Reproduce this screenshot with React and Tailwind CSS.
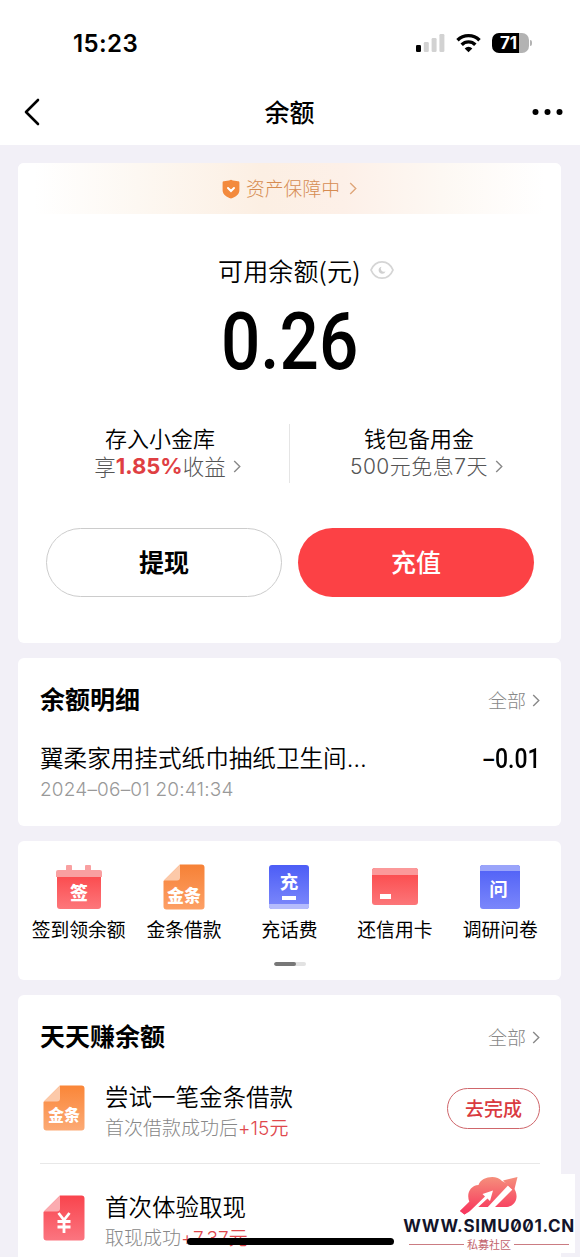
import React from "react";

const Chevron = ({ className }) => (
  <svg viewBox="0 0 8 14" className={className} fill="none" stroke="currentColor" strokeWidth="1.5">
    <path d="M1 1l6 6-6 6" />
  </svg>
);

function StatusBar() {
  return (
    <div className="flex h-[80px] items-start justify-between pl-[73px] pr-[48px] pt-[29px]">
      <div className="font-[Inter] text-[24px] font-semibold leading-[29px] tracking-[0.4px]">15:23</div>
      <div className="flex items-center pt-[4px]">
        <svg width="30" height="20" viewBox="0 0 30 20">
          <rect x="0" y="12" width="5" height="7" rx="1.3" fill="#000" />
          <rect x="7.8" y="9" width="5" height="10" rx="1.3" fill="#d2d2d2" />
          <rect x="15.6" y="5" width="5" height="14" rx="1.3" fill="#d2d2d2" />
          <rect x="23.4" y="1" width="5" height="18" rx="1.3" fill="#d2d2d2" />
        </svg>
        <svg width="25" height="20" viewBox="0 0 25 20" className="ml-[10px]" fill="none" stroke="#000" strokeWidth="3.4">
          <path d="M1.500 7.200a15.500 15.500 0 0 1 22 0" />
          <path d="M5.700 11.700a9.500 9.500 0 0 1 13.600 0" />
          <path d="M12.500 19.300l-3.800-3.900a5.300 5.300 0 0 1 7.600 0z" fill="#000" stroke="none" />
        </svg>
        <div className="ml-[11px] flex h-[20px] w-[37px] items-center justify-center overflow-hidden rounded-[7px] bg-[linear-gradient(90deg,#000_27px,#b3b3b3_27px)] pr-[4px]">
          <span className="font-[Inter] text-[17px] font-bold leading-[20px] text-white">71</span>
        </div>
        <div className="ml-[1px] h-[6px] w-[2px] rounded-r bg-[#b3b3b3]" />
      </div>
    </div>
  );
}

function Header() {
  return (
    <div className="flex h-[65px] items-center justify-between pl-[23px] pr-[17px]">
      <svg width="17" height="28" viewBox="0 0 17 28" className="-mt-[2px]" fill="none" stroke="#000" strokeWidth="2.6" strokeLinecap="round" strokeLinejoin="round">
        <path d="M15 2L3 14l12 12" />
      </svg>
      <h1 className="-mt-[3px] pl-[7px] text-[25px] font-medium leading-[36px]">余额</h1>
      <svg width="31" height="8" viewBox="0 0 31 8" className="-mt-[2px]">
        <circle cx="3.5" cy="4" r="3" />
        <circle cx="15.5" cy="4" r="3" />
        <circle cx="27.5" cy="4" r="3" />
      </svg>
    </div>
  );
}

function Offer({ title, className, children }) {
  return (
    <div className={`flex flex-1 flex-col items-center ${className}`}>
      <div className="text-[22px] font-[350] leading-[26px]">{title}</div>
      <div className="mt-[3px] flex h-[26px] items-center whitespace-nowrap font-light leading-[26px] text-[#555]">
        {children}
        <Chevron className="-mr-[15px] ml-[7px] h-[13px] w-[8px] text-[#888]" />
      </div>
    </div>
  );
}

function BalanceCard() {
  return (
    <section className="h-[480px] overflow-hidden rounded-[6px] bg-white">
      <div className="flex h-[51px] items-center justify-center bg-[linear-gradient(90deg,#fff_3%,#fdf8f2_22%,#fcefe3_45%,#fdf0e8_60%,#fdf8f3_78%,#fff_97%)] text-[#d68c51]">
        <svg width="18" height="20" viewBox="0 0 18 20" className="mr-[6px]">
          <path d="M9 .8c2.700 1 5 1.400 7 1.400a1.300 1.300 0 0 1 1.400 1.300v7.800c0 4.500-4.200 6.800-8.400 8.200-4.200-1.400-8.400-3.700-8.400-8.200V3.500A1.300 1.300 0 0 1 2 2.200C4 2.200 6.300 1.800 9 .8z" fill="#f38a3d" />
          <path d="M6 9l3 3 3-3" fill="none" stroke="#fff" strokeWidth="2" strokeLinecap="round" />
        </svg>
        <span className="text-[18.800px] font-light">资产保障中</span>
        <Chevron className="ml-[9px] h-[13px] w-[8px] text-[#dfa77b]" />
      </div>
      <div className="mt-[38px] flex h-[36px] items-center whitespace-nowrap pl-[200px]">
        <span className="text-[25px] font-[350] leading-[36px] tracking-[0.15px]">可用余额(元)</span>
        <svg width="24" height="20" viewBox="0 0 24 20" className="ml-[9px]" fill="none">
          <path d="M1 10C3.500 4 7.500 1.800 12 1.800S20.500 4 23 10c-2.500 6-6.500 8.200-11 8.200S3.500 16 1 10z" stroke="#d5d5d5" strokeWidth="1.800" />
          <path d="M11.500 6.800a3.500 3.500 0 1 0 4 4.400 3 3 0 0 1-4-4.400z" fill="#d0d0d0" />
        </svg>
      </div>
      <div className="mt-[12px] h-[82px] pl-[203px]">
        <div className="inline-block origin-left scale-x-[0.865] whitespace-nowrap font-[Roboto] text-[80px] font-medium leading-[84px]">0.26</div>
      </div>
      <div className="mt-[42px] flex h-[59px] items-stretch">
        <Offer title="存入小金库" className="pl-[13px]">
          <span className="text-[21.500px]">享</span>
          <b className="font-[Inter] text-[22px] font-bold text-[#df3f43]">1.85%</b>
          <span className="text-[21.500px]">收益</span>
        </Offer>
        <div className="w-px bg-[#e5e5e5]" />
        <Offer title="钱包备用金" className="pr-[13px]">
          <span className="pt-px font-[Inter,Noto_Sans_CJK_SC] text-[21px] tracking-[0.5px]">500元免息7天</span>
        </Offer>
      </div>
      <div className="mt-[45px] flex gap-[16px] pl-[28px] pr-[27px]">
        <button className="h-[69px] w-[236px] rounded-full border border-[#ccc] pb-px text-[25px] font-bold">提现</button>
        <button className="h-[69px] w-[236px] rounded-full bg-[#fc4145] pb-px text-[25px] font-medium text-white">充值</button>
      </div>
    </section>
  );
}

function SectionHead({ title }) {
  return (
    <div className="flex items-center justify-between">
      <h2 className="text-[25px] font-bold leading-[36px]">{title}</h2>
      <a className="flex items-center pt-[4px] text-[19px] font-light text-[#888]">
        全部
        <Chevron className="ml-[6px] h-[13px] w-[8px]" />
      </a>
    </div>
  );
}

function DetailCard() {
  return (
    <section className="h-[168px] rounded-[6px] bg-white pl-[22px] pr-[21px] pt-[22px]">
      <SectionHead title="余额明细" />
      <div className="mt-[24px] flex h-[36px] items-center justify-between whitespace-nowrap">
        <div className="text-[23.600px] font-[350] leading-[36px]">
          翼柔家用挂式纸巾抽纸卫生间<span className="font-[Inter] tracking-[1px]">…</span>
        </div>
        <div className="flex pt-px font-[Roboto] text-[27px] font-medium leading-[36px]">
          <span className="mr-[1px] font-[Inter] text-[21px] font-semibold">–</span>
          <span className="w-[45px] origin-left scale-x-[0.85]">0.01</span>
        </div>
      </div>
      <div className="mt-px whitespace-nowrap font-[Inter] text-[19px] font-light leading-[26px] tracking-[0.180px] text-[#999]">2024–06–01 20:41:34</div>
    </section>
  );
}

function Grad({ id, from, to }) {
  return (
    <linearGradient id={id} x1="0" y1="0" x2="0" y2="1">
      <stop offset="0" stopColor={from} />
      <stop offset="1" stopColor={to} />
    </linearGradient>
  );
}

const glyph = { fill: "#fff", fontFamily: "Noto Sans CJK SC", fontWeight: 900, textAnchor: "middle" };

function SignIcon() {
  return (
    <svg width="48" height="46" viewBox="0 0 48 46">
      <defs><Grad id="sign" from="#fb484b" to="#fd777b" /></defs>
      <rect x="2" y="9" width="44" height="36" rx="3" fill="url(#sign)" />
      <path d="M11 6V2a1 1 0 0 1 1-1h4a1 1 0 0 1 1 1v4h13V2a1 1 0 0 1 1-1h4a1 1 0 0 1 1 1v4h9a2 2 0 0 1 2 2v5H1V8a2 2 0 0 1 2-2z" fill="#f9a0a1" />
      <text x="24" y="36" fontSize="18" {...glyph}>签</text>
    </svg>
  );
}

function FileIcon({ id, from, to, fold, text, size, y }) {
  return (
    <svg width="42" height="46" viewBox="0 0 42 46">
      <defs><Grad id={id} from={from} to={to} /></defs>
      <path d="M17 .5h21.500a3 3 0 0 1 3 3v39a3 3 0 0 1-3 3h-35a3 3 0 0 1-3-3V17z" fill={`url(#${id})`} />
      <path d="M17 .5v13a3 3 0 0 1-3 3H.8z" fill={fold} />
      <text x="21" y={y} fontSize={size} {...glyph}>{text}</text>
    </svg>
  );
}

function YuanIcon() {
  return (
    <svg width="42" height="46" viewBox="0 0 42 46">
      <defs><Grad id="cash" from="#f9444d" to="#fb7580" /></defs>
      <path d="M17 .5h21.500a3 3 0 0 1 3 3v39a3 3 0 0 1-3 3h-35a3 3 0 0 1-3-3V17z" fill="url(#cash)" />
      <path d="M17 .5v13a3 3 0 0 1-3 3H.8z" fill="#fbabb0" />
      <path d="M15.500 18l5.500 7 5.500-7M14.500 26.500h13M14.500 32h13M21 25v13" fill="none" stroke="#fff" strokeWidth="2.800" />
    </svg>
  );
}

function PhoneIcon() {
  return (
    <svg width="40" height="46" viewBox="0 0 40 46">
      <defs><Grad id="phone" from="#4c5df6" to="#7e8afb" /></defs>
      <rect y="1" width="40" height="44" rx="3" fill="url(#phone)" />
      <path d="M0 40h40v2a3 3 0 0 1-3 3H3a3 3 0 0 1-3-3z" fill="#b5bcfc" />
      <text x="20" y="25" fontSize="18.500" {...glyph} fontWeight={700}>充</text>
      <rect x="13" y="32" width="14" height="4" fill="#fff" />
    </svg>
  );
}

function CardIcon() {
  return (
    <svg width="46" height="46" viewBox="0 0 46 46">
      <defs><Grad id="card" from="#fb4648" to="#fc7679" /></defs>
      <rect y="4" width="46" height="37" rx="3" fill="url(#card)" />
      <path d="M0 11V7a3 3 0 0 1 3-3h40a3 3 0 0 1 3 3v4z" fill="#fb999a" />
      <rect x="8" y="30" width="11" height="5" fill="#fff" />
    </svg>
  );
}

function SurveyIcon() {
  return (
    <svg width="40" height="46" viewBox="0 0 40 46">
      <defs><Grad id="survey" from="#4e5ff6" to="#7b87fb" /></defs>
      <rect y="1" width="40" height="44" rx="3" fill="url(#survey)" />
      <path d="M0 7V4a3 3 0 0 1 3-3h34a3 3 0 0 1 3 3v3z" fill="#9aa4fa" />
      <text x="18.500" y="32" fontSize="18.500" {...glyph} fontWeight={700}>问</text>
    </svg>
  );
}

function Shortcuts() {
  const items = [
    [<SignIcon />, "签到领余额"],
    [<FileIcon id="gold" from="#f68136" to="#fda066" fold="#fcc9a9" text="金条" size={17} y={38} />, "金条借款"],
    [<PhoneIcon />, "充话费"],
    [<CardIcon />, "还信用卡"],
    [<SurveyIcon />, "调研问卷"],
  ];
  return (
    <section className="h-[139px] rounded-[6px] bg-white px-[8px] pt-[23px]">
      <div className="grid grid-cols-5">
        {items.map(([icon, label]) => (
          <div key={label} className="flex flex-col items-center">
            {icon}
            <div className="mt-[5px] whitespace-nowrap text-[18.800px] leading-[28px]">{label}</div>
          </div>
        ))}
      </div>
      <div className="mx-auto mt-[19px] flex h-[4px] w-[32px] overflow-hidden rounded-full bg-[#e2e2e2]">
        <div className="w-[22px] rounded-full bg-[#777]" />
      </div>
    </section>
  );
}

function Task({ icon, title, note, reward }) {
  return (
    <div className="flex items-start">
      <div className="ml-[3px] mt-[5px]">{icon}</div>
      <div className="ml-[20px] whitespace-nowrap">
        <div className="text-[23.500px] font-[350] leading-[32px]">{title}</div>
        <div className="text-[19px] font-light leading-[30px] text-[#888]">
          {note}
          <span className="font-[Inter,Noto_Sans_CJK_SC] font-[350] tracking-[0.1px] text-[#e0484d]">{reward}</span>
        </div>
      </div>
    </div>
  );
}

function Tasks() {
  return (
    <section className="h-[262px] rounded-t-[6px] bg-white pl-[22px] pr-[21px] pt-[22px]">
      <SectionHead title="天天赚余额" />
      <div className="mt-[27px] flex h-[84px] items-start justify-between border-b border-[#e8e8e8]">
        <Task icon={<FileIcon id="gold2" from="#fa8638" to="#fcaa75" fold="#fcc9a9" text="金条" size={16} y={36} />} title="尝试一笔金条借款" note="首次借款成功后" reward="+15元" />
        <button className="mt-[8px] h-[41px] w-[93px] shrink-0 rounded-full border border-[#cf666b] pb-px text-[19px] font-medium text-[#d93a40]">去完成</button>
      </div>
      <div className="mt-[26px]">
        <Task icon={<YuanIcon />} title="首次体验取现" note="取现成功" reward="+7.37元" />
      </div>
    </section>
  );
}

function Watermark() {
  return (
    <div className="absolute bottom-0 right-[5px] flex h-[83px] w-[172px] flex-col items-center">
      <div className="absolute right-0 top-0 h-[79px] w-[150px] bg-white" />
      <svg width="58" height="39" viewBox="0 -1 58 39" className="relative mt-[2px]">
        <defs>
          <linearGradient id="cloud" gradientUnits="userSpaceOnUse" x1="0" y1="0" x2="0" y2="34">
            <stop offset="0" stopColor="#f58f7c" />
            <stop offset="1" stopColor="#f83a5e" />
          </linearGradient>
          <mask id="arrowGap">
            <rect y="-1" width="58" height="39" fill="#fff" />
            <path d="M9 35L25 19.500l-2.500-2.500L33 13.500 30 24l-2.500-2.500L15 33z" fill="#000" />
            <path d="M25 33L48 8.500l4.500 4L33 32z" fill="#000" />
          </mask>
        </defs>
        <g fill="url(#cloud)">
          <path mask="url(#arrowGap)" d="M9.500 25C6 17 10 8.500 18.500 8 21 0 36-3 42 4l10 5c8 8 5 20-5 21H17L4.500 37.500 0 34z" />
          <path d="M0 34L12 22l5 4L4.500 37.500z" />
          <path d="M43 3.500L57.500 0 54 14l-3.500-3-3-3z" />
        </g>
      </svg>
      <div className="relative mt-[2px] h-[19px] whitespace-nowrap font-[Inter] text-[17px] font-bold leading-[19px] tracking-[0.65px] text-[#12142a] [font-feature-settings:'zero']">
        WWW.SIMU001.CN
      </div>
      <div className="relative mt-[1px] flex w-[160px] items-center gap-[3px] text-[11px] leading-[14px] text-[#c3646d]">
        <span className="h-px flex-1 bg-[#cb7c82]" />
        <span>私募社区</span>
        <span className="h-px flex-1 bg-[#cb7c82]" />
      </div>
    </div>
  );
}

export default function App() {
  return (
    <div className="relative h-[1257px] w-[580px] overflow-hidden bg-[#f2f0f7] font-[Noto_Sans_CJK_SC,sans-serif] text-black">
      <div className="h-[145px] bg-white">
        <StatusBar />
        <Header />
      </div>
      <main className="flex flex-col gap-[15px] pl-[18px] pr-[19px] pt-[18px]">
        <BalanceCard />
        <DetailCard />
        <Shortcuts />
        <Tasks />
      </main>
      <div className="absolute bottom-[12px] left-[187px] h-[7px] w-[207px] rounded-full bg-black" />
      <Watermark />
    </div>
  );
}
